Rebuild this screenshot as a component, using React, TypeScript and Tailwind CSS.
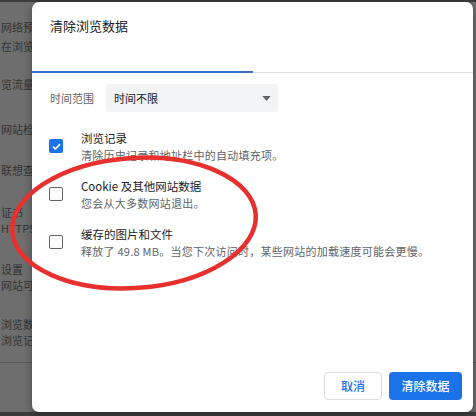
import React from 'react'

const FONT = { fontFamily: '"Noto Sans CJK SC", "Noto Sans", sans-serif' }

const BG_LINES = [
  { text: '网络预测', cls: 'mt-[17px]' },
  { text: '在浏览器', cls: 'mt-[3px]' },
  { text: '览流量', cls: 'mt-[22px]' },
  { text: '网站检查', cls: 'mt-[29px]' },
  { text: '联想查询', cls: 'mt-[25px]' },
  { text: '证书', cls: 'mt-[26px]' },
  { text: 'HTTPS', cls: 'mt-[0px]' },
  { text: '设置', cls: 'mt-[25px]' },
  { text: '网站可', cls: 'mt-[0px]' },
  { text: '浏览数据', cls: 'mt-[23px]' },
  { text: '浏览记录', cls: 'mt-[0px]' },
]

function Checkbox({ checked }: { checked?: boolean }) {
  if (checked) {
    return (
      <div className="flex h-[14px] w-[14px] shrink-0 items-center justify-center rounded-[2px] bg-[#1a73e8]">
        <svg viewBox="0 0 12 12" className="h-[11px] w-[11px]">
          <path d="M2.2 6.2 L4.8 8.7 L9.8 3.4" fill="none" stroke="white" strokeWidth="1.7" />
        </svg>
      </div>
    )
  }
  return <div className="h-[14px] w-[14px] shrink-0 rounded-[2px] border-[1.6px] border-[#5f6368]" />
}

function Option({ checked, title, sub }: { checked?: boolean; title: string; sub: string }) {
  return (
    <div className="flex h-[48px] items-center">
      <div className="w-[32px] pl-[-1px]">
        <Checkbox checked={checked} />
      </div>
      <div className="flex flex-col">
        <span className="text-[11.5px] leading-[17px] text-[#202124]">{title}</span>
        <span className="text-[11px] leading-[16px] tracking-[0.25px] text-[#5f6368]">{sub}</span>
      </div>
    </div>
  )
}

export default function App() {
  return (
    <div className="relative h-[416px] w-[476px] overflow-hidden bg-[#3d3d3d]" style={FONT}>
      {/* page behind the scrim */}
      <div className="mt-[2px] flex h-[410px] flex-col bg-[#6e6e6e]">
        <div className="flex flex-col pl-[1px] text-[11px] leading-[16px] text-[#333333]">
          {BG_LINES.map((l, i) => (
            <span key={i} className={`${l.cls} whitespace-nowrap`}>
              {l.text}
            </span>
          ))}
        </div>
        <div className="mt-[14px] h-px w-full bg-[#5a5a5a]" />
      </div>

      {/* dialog */}
      <div className="absolute left-[32px] top-[2px] flex h-[410px] w-[441px] flex-col rounded-[7px] bg-white shadow-[0_2px_8px_rgba(0,0,0,0.35)]">
        <div className="px-[18px] pt-[14px] text-[13px] leading-[20px] text-[#202124]">清除浏览数据</div>

        {/* tabs */}
        <div className="mt-[35px] flex h-[2px] items-end">
          <div className="h-[2px] w-[221px] bg-[#3a6fc4]" />
          <div className="h-px flex-1 bg-[#dadce0]" />
        </div>

        <div className="flex flex-col px-[17px]">
          <div className="mt-[11px] flex h-[28px] items-center">
            <span className="w-[57px] pl-[1px] text-[11px] text-[#5f6368]">时间范围</span>
            <div className="flex h-[28px] w-[172px] items-center justify-between rounded-[3px] bg-[#f1f3f4] pl-[8px] pr-[7px]">
              <span className="text-[11px] text-[#202124]">时间不限</span>
              <svg viewBox="0 0 10 6" className="h-[5px] w-[9px]">
                <path d="M0 0 L10 0 L5 6 Z" fill="#5f6368" />
              </svg>
            </div>
          </div>

          <div className="mt-[10px] flex flex-col">
            <Option checked title="浏览记录" sub="清除历史记录和地址栏中的自动填充项。" />
            <Option title="Cookie 及其他网站数据" sub="您会从大多数网站退出。" />
            <Option title="缓存的图片和文件" sub="释放了 49.8 MB。当您下次访问时，某些网站的加载速度可能会更慢。" />
          </div>
        </div>

        <div className="mt-auto flex justify-end gap-[7px] pb-[12px] pr-[11px]">
          <button className="h-[28px] w-[58px] rounded-[4px] border border-[#dadce0] bg-white text-[12px] font-medium text-[#1a73e8]">
            取消
          </button>
          <button className="h-[28px] w-[73px] rounded-[4px] bg-[#1a73e8] text-[12px] font-medium text-white">
            清除数据
          </button>
        </div>
      </div>

      {/* hand-drawn red circle */}
      <svg className="pointer-events-none absolute left-0 top-0" width="476" height="416">
        <ellipse
          cx="134"
          cy="223"
          rx="122"
          ry="65"
          transform="rotate(-4 134 223)"
          fill="none"
          stroke="#e8302e"
          strokeWidth="4.5"
        />
      </svg>
    </div>
  )
}
